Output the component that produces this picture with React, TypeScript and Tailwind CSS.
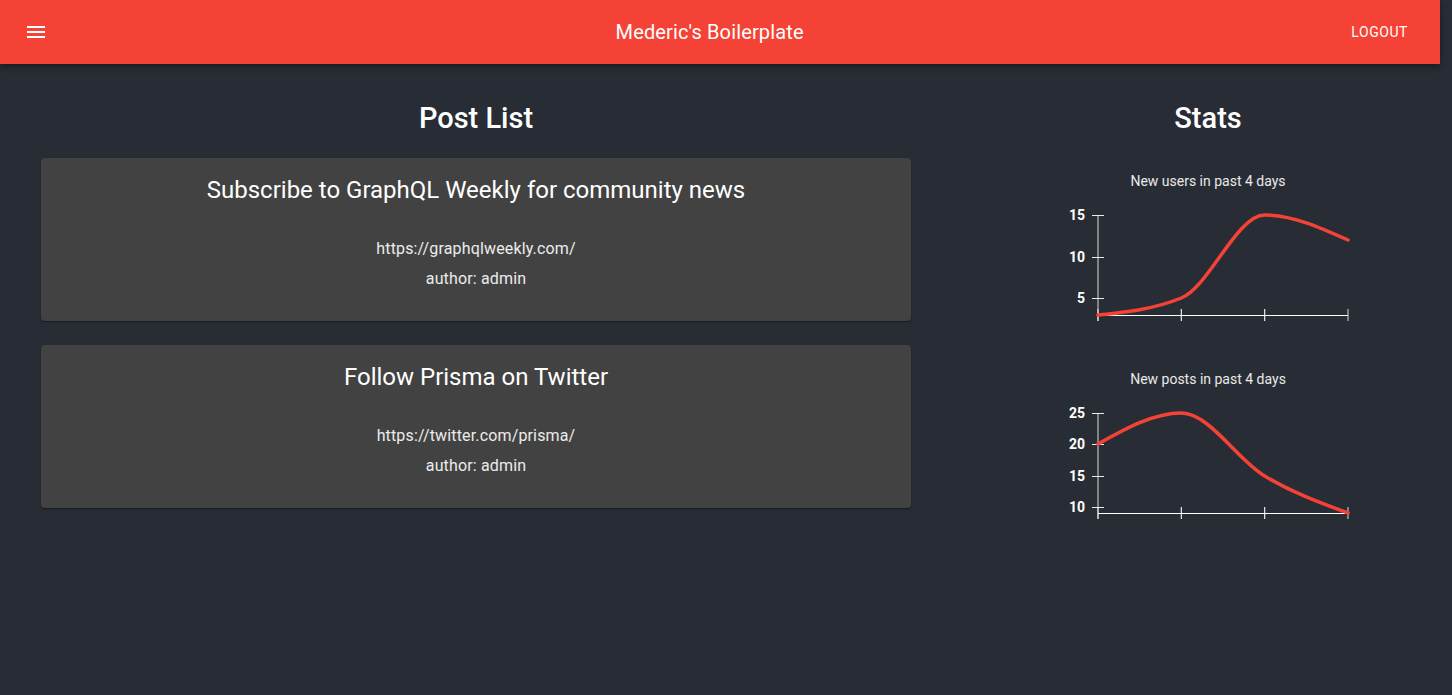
import React from 'react';

type Post = { title: string; url: string; author: string };

const posts: Post[] = [
  { title: 'Subscribe to GraphQL Weekly for community news', url: 'https://graphqlweekly.com/', author: 'admin' },
  { title: 'Follow Prisma on Twitter', url: 'https://twitter.com/prisma/', author: 'admin' },
];

// axis origin in svg coords: x=50, y=115; x ticks every 83.33px
const xTicks = [50, 133.33, 216.67, 300];

type Chart = {
  label: string;
  ticks: { y: number; text: string }[];
  path: string;
};

const charts: Chart[] = [
  {
    label: 'New users in past 4 days',
    ticks: [
      { y: 15, text: '15' },
      { y: 57, text: '10' },
      { y: 98, text: '5' },
    ],
    path: 'M50,115 C77.78,112.17 105.56,109.33 133.33,98 C161.11,86.67 188.89,15 216.67,15 C244.44,15 272.22,27.5 300,40',
  },
  {
    label: 'New posts in past 4 days',
    ticks: [
      { y: 15, text: '25' },
      { y: 46, text: '20' },
      { y: 78, text: '15' },
      { y: 109, text: '10' },
    ],
    path: 'M50,46 C77.78,30.5 105.56,15 133.33,15 C161.11,15 188.89,61.33 216.67,78 C244.44,94.67 272.22,104.83 300,115',
  },
];

function LineChart({ chart }: { chart: Chart }) {
  return (
    <div className="flex flex-col items-center">
      <div className="text-[14px] leading-4 text-white/90">{chart.label}</div>
      <svg width="320" height="130" className="mt-[11px] block">
        {/* y axis */}
        <line x1="50" y1="15" x2="50" y2="121" stroke="rgba(255,255,255,0.55)" strokeWidth="1.5" />
        {chart.ticks.map(t => (
          <g key={t.text}>
            <line x1="44" y1={t.y + 0.5} x2="56" y2={t.y + 0.5} stroke="rgba(255,255,255,0.9)" strokeWidth="1" />
            <text x="37" y={t.y + 5} textAnchor="end" fill="#fff" fontSize="14" fontWeight="700" fontFamily="Roboto, sans-serif">
              {t.text}
            </text>
          </g>
        ))}
        {/* x axis */}
        <line x1="50" y1="115.5" x2="300" y2="115.5" stroke="#fff" strokeWidth="1" />
        {xTicks.map((x, i) => (
          <line key={x} x1={x} y1="109" x2={x} y2="121" stroke={i === 0 || i === 3 ? 'rgba(255,255,255,0.55)' : 'rgba(255,255,255,0.9)'} strokeWidth={i === 0 || i === 3 ? 1.5 : 1.2} />
        ))}
        <path d={chart.path} fill="none" stroke="#f44336" strokeWidth="3.5" strokeLinecap="round" />
      </svg>
    </div>
  );
}

function PostCard({ post }: { post: Post }) {
  return (
    <div className="rounded bg-[#424242] px-4 pt-4 pb-[30px] text-center shadow-[0_2px_1px_-1px_rgba(0,0,0,0.2),0_1px_1px_0_rgba(0,0,0,0.14),0_1px_3px_0_rgba(0,0,0,0.12)]">
      <div className="text-[24px] leading-8 text-white">{post.title}</div>
      <div className="mt-[31px] text-[16px] leading-6 tracking-[0.15px] text-white/90">{post.url}</div>
      <div className="mt-[6px] text-[16px] leading-6 tracking-[0.15px] text-white/90">author: {post.author}</div>
    </div>
  );
}

export default function App() {
  return (
    <div className="min-h-[695px] w-[1452px] overflow-hidden bg-[#282c34] font-['Roboto',sans-serif]">
      <header className="relative z-10 flex h-16 w-[1440px] items-center bg-[#f44336] pl-6 pr-6 text-white shadow-[0_2px_4px_-1px_rgba(0,0,0,0.2),0_4px_5px_0_rgba(0,0,0,0.14),0_1px_10px_0_rgba(0,0,0,0.12)]">
        <button className="-ml-3 mr-4 flex h-12 w-12 items-center justify-center">
          <svg width="24" height="24" viewBox="0 0 24 24" fill="#fff">
            <path d="M3 18h18v-2H3v2zm0-5h18v-2H3v2zm0-7v2h18V6H3z" />
          </svg>
        </button>
        <div className="flex-1 text-center text-[20px] leading-8 font-normal tracking-[0.0075em]">Mederic's Boilerplate</div>
        <button className="min-w-16 px-2 py-1.5 text-[14px] leading-6 font-normal tracking-[0.04em] uppercase">Logout</button>
      </header>

      <main className="flex">
        <section className="w-[952px] shrink-0 px-[41px] pt-[37px]">
          <h1 className="h-[34px] text-center text-[29px] leading-[34px] font-medium text-white">Post List</h1>
          <div className="mt-[23px] flex flex-col gap-6">
            {posts.map(p => (
              <PostCard key={p.title} post={p} />
            ))}
          </div>
        </section>
        <section className="w-[512px] shrink-0 pt-[37px]">
          <h1 className="h-[34px] text-center text-[29px] leading-[34px] font-medium text-white">Stats</h1>
          <div className="mt-[38px] flex flex-col gap-[41px]">
            {charts.map(c => (
              <LineChart key={c.label} chart={c} />
            ))}
          </div>
        </section>
      </main>
    </div>
  );
}
